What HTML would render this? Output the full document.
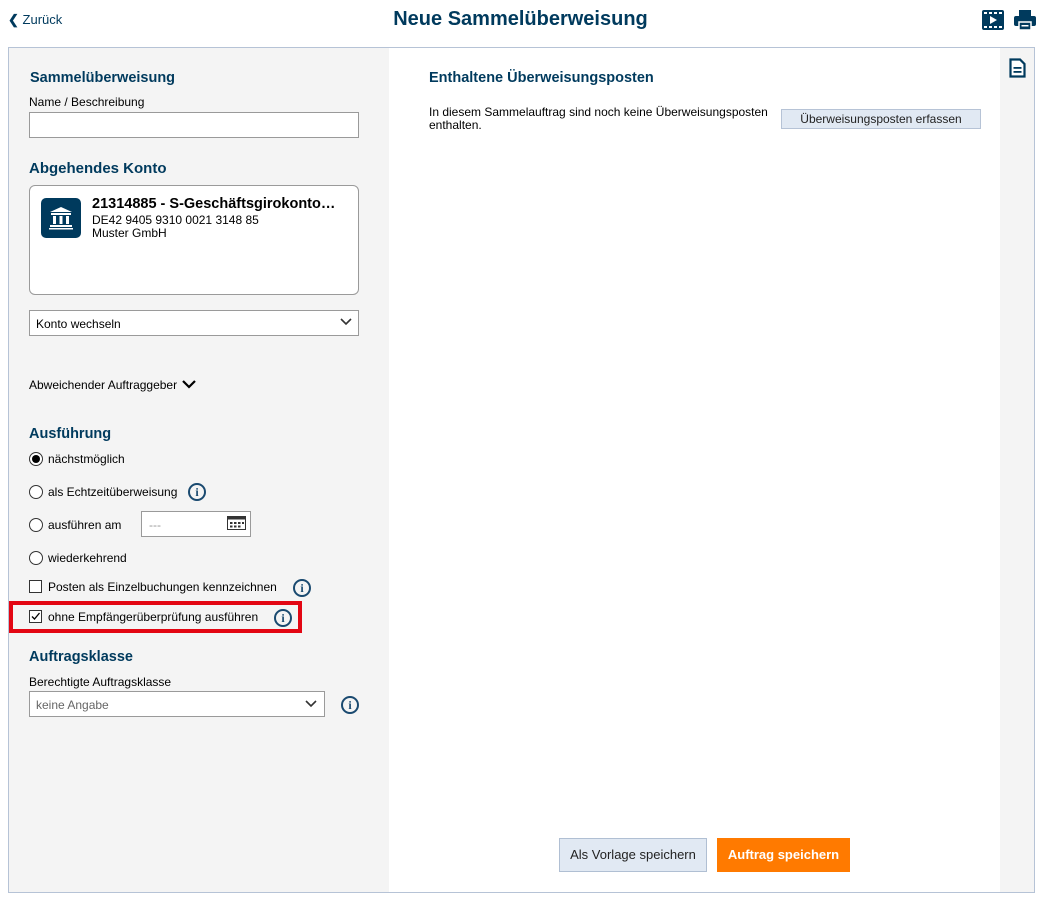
<!DOCTYPE html>
<html><head><meta charset="utf-8"><style>
*{box-sizing:border-box;margin:0;padding:0}
body{width:1041px;height:897px;background:#fff;font-family:"Liberation Sans",Arial,sans-serif;font-size:12px;color:#000;position:relative;overflow:hidden}
.a{position:absolute}
h2{position:absolute;font-size:14.5px;color:#003a5d;font-weight:bold;margin-top:1px}
.lbl{position:absolute;font-size:12px}
.in{position:absolute;background:#fff;border:1px solid #9a9a9a}
.radio{position:absolute;width:14px;height:14px;border:1px solid #333;border-radius:50%;background:#fff}
.cb{position:absolute;width:13px;height:13px;border:1px solid #333;background:#fff}
.info{position:absolute;width:18px;height:18px;border:2px solid #1a4a70;border-radius:50%;color:#1a4a70;font:bold 12px "Liberation Serif",serif;text-align:center;line-height:14px}
</style></head><body>
<div class="a" style="left:8px;top:12px;font-size:13px;color:#003a5d"><span style="font-weight:bold">&#10094;</span> Zurück</div>
<div class="a" style="left:0;width:1041px;top:8px;text-align:center;font-size:20px;font-weight:bold;color:#003a5d">Neue Sammelüberweisung</div>
<svg class="a" style="left:982px;top:10px" width="22" height="20" viewBox="0 0 22 20"><rect x="0" y="0" width="22" height="20" rx="2" fill="#003a5d"/><g fill="#fff"><rect x="2" y="2" width="3" height="2"/><rect x="7" y="2" width="3" height="2"/><rect x="12" y="2" width="3" height="2"/><rect x="17" y="2" width="3" height="2"/><rect x="2" y="16" width="3" height="2"/><rect x="7" y="16" width="3" height="2"/><rect x="12" y="16" width="3" height="2"/><rect x="17" y="16" width="3" height="2"/><path d="M8 6 L15 10 L8 14Z"/></g></svg>
<svg class="a" style="left:1014px;top:9px" width="22" height="22" viewBox="0 0 22 22"><rect x="5" y="1" width="12" height="6" fill="#003a5d"/><rect x="0" y="7" width="22" height="10" rx="2" fill="#003a5d"/><rect x="5" y="13" width="12" height="8" fill="#003a5d" stroke="#fff" stroke-width="1.5"/><rect x="7.5" y="16" width="7" height="1.5" fill="#fff"/></svg>
<div class="a" style="left:8px;top:47px;width:1027px;height:846px;border:1px solid #b6c3d6;background:#fff"></div>
<div class="a" style="left:9px;top:48px;width:380px;height:844px;background:#f4f4f4"></div>
<div class="a" style="left:1000px;top:48px;width:34px;height:844px;background:#f4f4f4"></div>
<svg class="a" style="left:1009px;top:58px" width="17" height="20" viewBox="0 0 17 20"><path d="M1.5 1.5 H11 L15.5 6 V18.5 H1.5Z" fill="#fff" stroke="#003a5d" stroke-width="2.2"/><rect x="4.5" y="9" width="8" height="1.8" fill="#003a5d"/><rect x="4.5" y="13" width="8" height="1.8" fill="#003a5d"/></svg>

<h2 style="left:30px;top:69px">Sammelüberweisung</h2>
<div class="lbl" style="left:29px;top:95px">Name / Beschreibung</div>
<div class="in" style="left:29px;top:112px;width:330px;height:26px"></div>
<h2 style="left:29px;top:159px;font-size:15px">Abgehendes Konto</h2>
<div class="a" style="left:29px;top:185px;width:330px;height:110px;border:1px solid #9a9a9a;border-radius:6px;background:#fff"></div>
<svg class="a" style="left:41px;top:198px" width="40" height="40" viewBox="0 0 40 40"><rect width="40" height="40" rx="5" fill="#003a5d"/><path d="M20 9 L31 14 H9Z" fill="#fff"/><rect x="10" y="15" width="20" height="2" fill="#fff"/><rect x="12" y="18" width="3" height="8" fill="#fff"/><rect x="18.5" y="18" width="3" height="8" fill="#fff"/><rect x="25" y="18" width="3" height="8" fill="#fff"/><rect x="9" y="27" width="22" height="2" fill="#fff"/><rect x="8" y="30" width="24" height="1.5" fill="#fff"/></svg>
<div class="a" style="left:92px;top:196px;font-size:14.5px;font-weight:bold">21314885 - S-Geschäftsgirokonto…</div>
<div class="a" style="left:92px;top:214px;line-height:13px">DE42 9405 9310 0021 3148 85<br>Muster GmbH</div>
<div class="in" style="left:29px;top:310px;width:330px;height:26px;padding:6px 0 0 6px">Konto wechseln</div>
<svg class="a" style="left:340px;top:318px" width="12" height="8"><path d="M1 1 L6 6 L11 1" fill="none" stroke="#333" stroke-width="1.6"/></svg>
<div class="lbl" style="left:29px;top:378px">Abweichender Auftraggeber</div>
<svg class="a" style="left:182px;top:379px" width="14" height="10"><path d="M1 2 L7 8 L13 2" fill="none" stroke="#000" stroke-width="2.2"/></svg>
<h2 style="left:29px;top:425px">Ausführung</h2>
<div class="radio" style="left:29px;top:452px"><div style="width:8px;height:8px;border-radius:50%;background:#000;margin:2px"></div></div>
<div class="lbl" style="left:48px;top:452px">nächstmöglich</div>
<div class="radio" style="left:29px;top:485px"></div>
<div class="lbl" style="left:48px;top:485px">als Echtzeitüberweisung</div>
<div class="info" style="left:188px;top:483px">i</div>
<div class="radio" style="left:29px;top:518px"></div>
<div class="lbl" style="left:48px;top:518px">ausführen am</div>
<div class="in" style="left:141px;top:511px;width:110px;height:26px;padding:6px 0 0 7px;color:#999">---</div>
<svg class="a" style="left:227px;top:516px" width="19" height="14"><rect x="0.5" y="0.5" width="18" height="13" fill="#fff" stroke="#333"/><rect x="0.5" y="0.5" width="18" height="3" fill="#333"/><g fill="#333"><rect x="3" y="6" width="2.5" height="2"/><rect x="7" y="6" width="2.5" height="2"/><rect x="11" y="6" width="2.5" height="2"/><rect x="15" y="6" width="2" height="2"/><rect x="3" y="9.5" width="2.5" height="2"/><rect x="7" y="9.5" width="2.5" height="2"/><rect x="11" y="9.5" width="2.5" height="2"/></g></svg>
<div class="radio" style="left:29px;top:551px"></div>
<div class="lbl" style="left:48px;top:551px">wiederkehrend</div>
<div class="cb" style="left:29px;top:580px"></div>
<div class="lbl" style="left:48px;top:580px">Posten als Einzelbuchungen kennzeichnen</div>
<div class="info" style="left:293px;top:579px">i</div>
<div class="a" style="left:9px;top:601px;width:293px;height:32px;border:4px solid #e30613"></div>
<div class="cb" style="left:29px;top:610px"><svg width="11" height="11" style="display:block"><path d="M2 5.5 L4.5 8 L9.5 2" fill="none" stroke="#000" stroke-width="1.3"/></svg></div>
<div class="lbl" style="left:48px;top:610px">ohne Empfängerüberprüfung ausführen</div>
<div class="info" style="left:274px;top:609px">i</div>
<h2 style="left:29px;top:648px">Auftragsklasse</h2>
<div class="lbl" style="left:29px;top:675px">Berechtigte Auftragsklasse</div>
<div class="in" style="left:29px;top:691px;width:296px;height:26px;padding:6px 0 0 6px;color:#666">keine Angabe</div>
<svg class="a" style="left:305px;top:700px" width="12" height="8"><path d="M1 1 L6 6 L11 1" fill="none" stroke="#333" stroke-width="1.6"/></svg>
<div class="info" style="left:341px;top:696px">i</div>

<h2 style="left:429px;top:69px">Enthaltene Überweisungsposten</h2>
<div class="a" style="left:429px;top:106px;line-height:13px">In diesem Sammelauftrag sind noch keine Überweisungsposten<br>enthalten.</div>
<div class="a" style="left:781px;top:109px;width:200px;height:20px;background:#e1e9f3;border:1px solid #b6c3d6;text-align:center;line-height:18px;color:#222">Überweisungsposten erfassen</div>
<div class="a" style="left:559px;top:838px;width:148px;height:34px;background:#e1e9f3;border:1px solid #b0bfd3;text-align:center;line-height:32px;font-size:13px;color:#222">Als Vorlage speichern</div>
<div class="a" style="left:717px;top:838px;width:133px;height:34px;background:#ff7a00;text-align:center;line-height:34px;font-size:13px;font-weight:bold;color:#fff">Auftrag speichern</div>
</body></html>
